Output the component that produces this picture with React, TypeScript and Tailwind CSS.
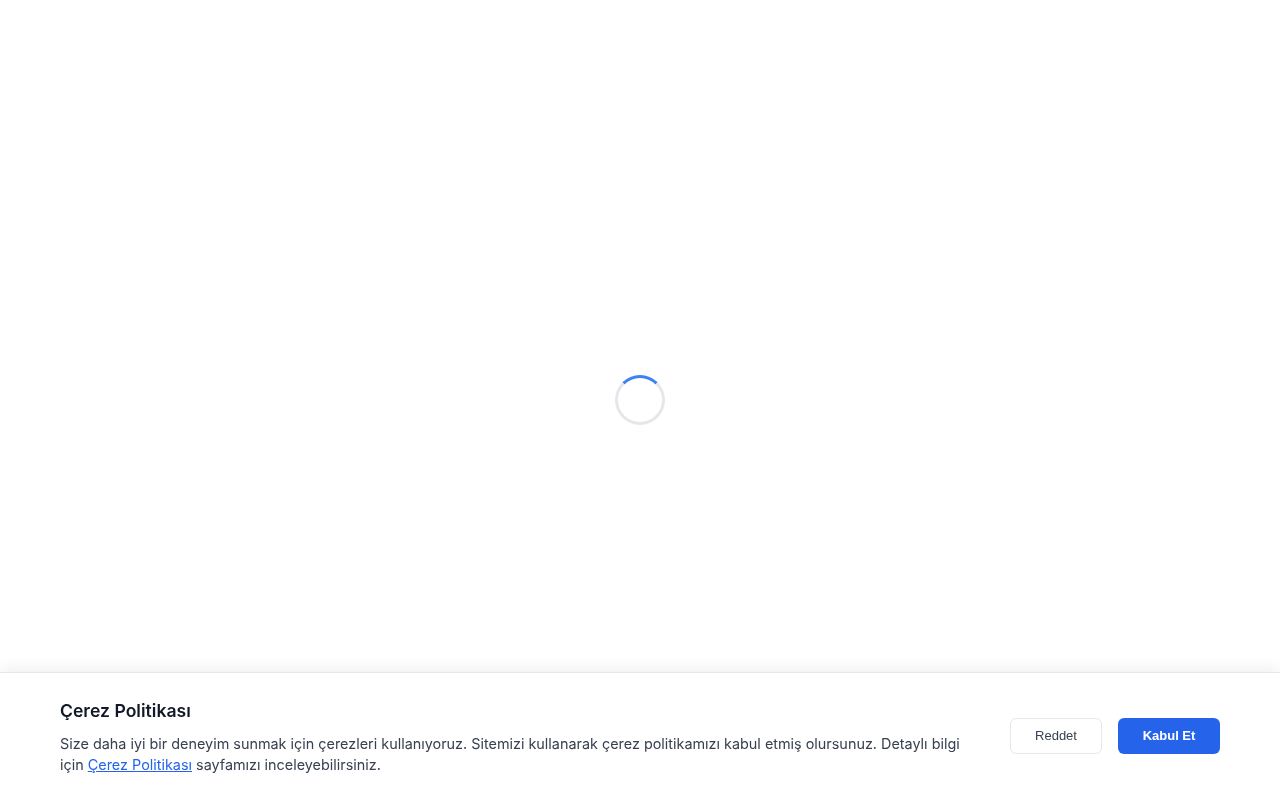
export default function App() {
  return (
    <div className="min-h-screen bg-white" style={{ fontFamily: 'Inter, "Noto Sans", sans-serif' }}>
      {/* loading state */}
      <div className="flex h-screen items-center justify-center">
        <div className="h-[50px] w-[50px] rounded-full border-[3px] border-[#e5e7eb] border-t-[#3b82f6]" />
      </div>

      {/* cookie consent banner */}
      <div className="fixed inset-x-0 bottom-0 border-t border-[#e5e7eb] bg-white shadow-[0_-4px_14px_rgba(0,0,0,0.06)]">
        <div className="flex items-center gap-8 px-[60px] pt-6 pb-[25px]">
          <div className="flex-1">
            <h3 className="mb-2 text-[17.6px] leading-7 font-semibold text-[#111827]">Çerez Politikası</h3>
            <p className="text-[14.4px] leading-[21px] text-[#374151]">
              Size daha iyi bir deneyim sunmak için çerezleri kullanıyoruz. Sitemizi kullanarak çerez politikamızı kabul
              etmiş olursunuz. Detaylı bilgi için{' '}
              <a href="#" className="text-[#2563eb] underline">
                Çerez Politikası
              </a>{' '}
              sayfamızı inceleyebilirsiniz.
            </p>
          </div>
          <div
            className="flex shrink-0 items-center gap-4"
            style={{ fontFamily: '"Liberation Sans", Arial, sans-serif' }}
          >
            <button className="h-9 w-[92px] rounded-md border border-[#e5e7eb] bg-white text-[13px] text-[#374151]">
              Reddet
            </button>
            <button className="h-9 w-[102px] rounded-md bg-[#2563eb] text-[13px] font-bold text-white">Kabul Et</button>
          </div>
        </div>
      </div>
    </div>
  );
}
